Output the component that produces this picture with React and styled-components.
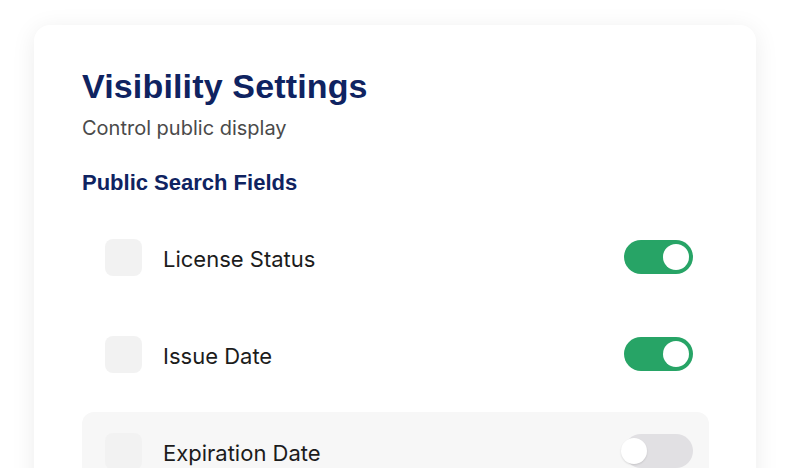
import React from "react";
import styled, { createGlobalStyle } from "styled-components";

const Global = createGlobalStyle`
  html, body { margin: 0; padding: 0; background: #ffffff; }
  body { font-family: Inter, "Liberation Sans", sans-serif; overflow: hidden; }
`;

const Page = styled.div`
  width: 790px;
  height: 468px;
  padding: 25px 34px 0 34px;
  box-sizing: border-box;
  overflow: hidden;
`;

const Card = styled.section`
  background: #ffffff;
  border-radius: 16px;
  box-shadow: 0 4px 24px rgba(0, 0, 0, 0.08);
  padding: 41px 47px 48px 48px;
  min-height: 600px;
  box-sizing: border-box;
`;

const Title = styled.h1`
  margin: 0;
  font-family: "Liberation Sans", Arial, sans-serif;
  font-weight: 700;
  font-size: 34px;
  letter-spacing: 0.15px;
  line-height: 40px;
  color: #0f2361;
`;

const Subtitle = styled.p`
  margin: 10px 0 0;
  font-family: Inter, sans-serif;
  font-size: 20px;
  line-height: 24px;
  color: #4a4a4a;
`;

const SectionTitle = styled.h2`
  margin: 30px 0 0;
  font-family: "Liberation Sans", Arial, sans-serif;
  font-weight: 700;
  font-size: 22px;
  line-height: 26px;
  color: #0f2361;
`;

const List = styled.div`
  display: flex;
  flex-direction: column;
  gap: 19px;
  margin-top: 22px;
`;

const Row = styled.div`
  display: flex;
  align-items: center;
  height: 78px;
  padding: 0 16px 0 23px;
  border-radius: 12px;
  background: ${(p) => (p.$highlight ? "#f7f7f7" : "transparent")};
`;

const Box = styled.div`
  width: 37px;
  height: 37px;
  border-radius: 8px;
  background: #f2f2f2;
  flex-shrink: 0;
`;

const Label = styled.span`
  margin: 4px 0 0 21px;
  flex: 1;
  font-family: Inter, sans-serif;
  font-size: 22px;
  color: #1c1c1c;
`;

const Toggle = styled.div`
  position: relative;
  width: 69px;
  height: 34px;
  border-radius: 17px;
  background: ${(p) => (p.$on ? "#27a466" : "#e1e0e3")};
  flex-shrink: 0;
`;

const Knob = styled.div`
  position: absolute;
  top: 4px;
  ${(p) => (p.$on ? "right: 4px;" : "left: -3px;")}
  width: 26px;
  height: 26px;
  border-radius: 50%;
  background: #ffffff;
  box-shadow: ${(p) => (p.$on ? "none" : "0 1px 2px rgba(0,0,0,0.12)")};
`;

const fields = [
  { label: "License Status", on: true },
  { label: "Issue Date", on: true },
  { label: "Expiration Date", on: false, highlight: true },
];

export default function App() {
  return (
    <>
      <Global />
      <Page>
        <Card>
          <Title>Visibility Settings</Title>
          <Subtitle>Control public display</Subtitle>
          <SectionTitle>Public Search Fields</SectionTitle>
          <List>
            {fields.map((f) => (
              <Row key={f.label} $highlight={f.highlight}>
                <Box />
                <Label>{f.label}</Label>
                <Toggle $on={f.on}>
                  <Knob $on={f.on} />
                </Toggle>
              </Row>
            ))}
          </List>
        </Card>
      </Page>
    </>
  );
}
